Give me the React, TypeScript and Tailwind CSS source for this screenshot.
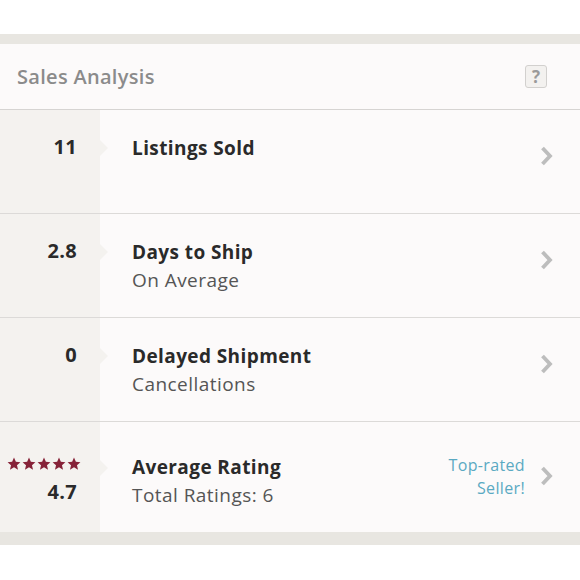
type Row = {
  value: string;
  title: string;
  subtitle?: string;
  stars?: boolean;
  badge?: string[];
};

const rows: Row[] = [
  { value: "11", title: "Listings Sold" },
  { value: "2.8", title: "Days to Ship", subtitle: "On Average" },
  { value: "0", title: "Delayed Shipment", subtitle: "Cancellations" },
  {
    value: "4.7",
    title: "Average Rating",
    subtitle: "Total Ratings: 6",
    stars: true,
    badge: ["Top-rated", "Seller!"],
  },
];

function Star() {
  return (
    <svg viewBox="0 0 24 24" className="h-[14px] w-[14px] fill-[#862238]">
      <path d="M12 1l3.2 7.2 7.8.7-5.9 5.2 1.8 7.7L12 17.7l-6.9 4.1 1.8-7.7L1 8.9l7.8-.7z" />
    </svg>
  );
}

function Chevron() {
  return (
    <svg viewBox="0 0 16 22" className="h-[22px] w-[16px]" fill="none">
      <path d="M3.5 3l7.5 8-7.5 8" stroke="#bdbdbd" strokeWidth="3.8" />
    </svg>
  );
}

function StatRow({ row, last }: { row: Row; last: boolean }) {
  return (
    <div
      className={`flex ${row.stars ? "h-[110px]" : "h-[104px]"} ${
        last ? "" : "border-b border-[#dcdad8]"
      }`}
    >
      <div className="relative w-[100px] shrink-0 bg-[#f4f2ef]">
        <div
          className={`flex flex-col items-end pr-[23px] ${
            row.stars ? "pt-[35px]" : "pt-[25px]"
          }`}
        >
          {row.stars && (
            <div className="mb-[9px] mr-[-4px] flex gap-[1px]">
              <Star />
              <Star />
              <Star />
              <Star />
              <Star />
            </div>
          )}
          <span className="text-[20px] font-bold leading-[24px] tracking-[0.3px] text-[#2a2a2a]">
            {row.value}
          </span>
        </div>
        <div
          className={`absolute right-[-8px] h-0 w-0 border-y-[8px] border-l-[8px] border-y-transparent border-l-[#f4f2ef] ${
            row.stars ? "top-[38px]" : "top-[30px]"
          }`}
        />
      </div>
      <div
        className={`flex flex-1 items-start justify-between pl-[32px] pr-[25px] ${
          row.stars ? "pt-[31px]" : "pt-[24px]"
        }`}
      >
        <div>
          <div className="text-[19px] font-bold leading-[28px] tracking-[0.4px] text-[#2a2a2a]">
            {row.title}
          </div>
          {row.subtitle && (
            <div className="text-[19px] leading-[28px] tracking-[0.45px] text-[#555]">
              {row.subtitle}
            </div>
          )}
        </div>
        <div className="flex items-start gap-[14px]">
          {row.badge && (
            <div className="mt-[1px] text-right text-[16px] leading-[23px] tracking-[0.35px] text-[#5aa9c2]">
              {row.badge.map((b) => (
                <div key={b}>{b}</div>
              ))}
            </div>
          )}
          <div className={row.stars ? "mt-[12px]" : "mt-[11px]"}>
            <Chevron />
          </div>
        </div>
      </div>
    </div>
  );
}

export default function App() {
  return (
    <div
      className="h-[580px] w-[580px] bg-white pt-[34px]"
      style={{ fontFamily: "'Open Sans', Lato, sans-serif" }}
    >
      <div className="bg-[#e8e6e1] pb-[13px] pt-[10px]">
        <div className="bg-[#fcfafa]">
          <div className="flex h-[66px] items-center justify-between border-b border-[#d6d4d2] pl-[17px] pr-[33px]">
            <h2 className="text-[20px] font-semibold tracking-[0.3px] text-[#8b8b8b]">
              Sales Analysis
            </h2>
            <div className="flex h-[23px] w-[22px] items-center justify-center rounded-[3px] border border-[#d2d0ce] bg-[#f3f1ef] text-[17px] font-bold text-[#9a9a9a]">
              ?
            </div>
          </div>
          {rows.map((r, i) => (
            <StatRow key={r.title} row={r} last={i === rows.length - 1} />
          ))}
        </div>
      </div>
    </div>
  );
}
